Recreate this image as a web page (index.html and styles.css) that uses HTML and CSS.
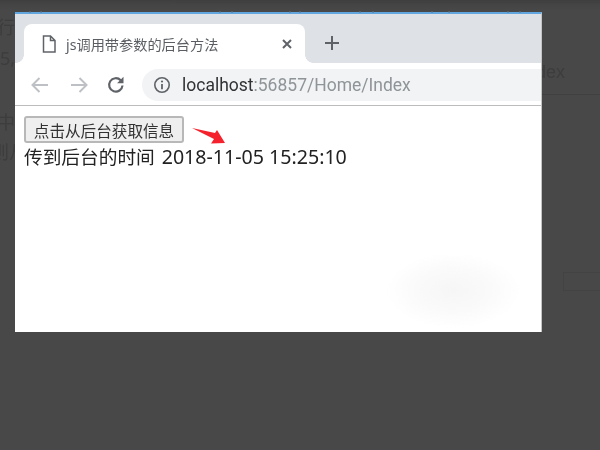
FILE: index.html
```html
<!DOCTYPE html>
<html lang="zh-CN">
<head>
<meta charset="utf-8">
<title>js调用带参数的后台方法</title>
<link rel="stylesheet" href="styles.css">
</head>
<body>
<div class="backdrop">
  <span class="bg-text bg-a">行为</span>
  <span class="bg-text bg-b">5,</span>
  <span class="bg-text bg-c">中点</span>
  <span class="bg-text bg-d">则从</span>
  <span class="bg-text bg-e">Index</span>
  <span class="bg-line bg-line-top"></span>
  <span class="bg-line bg-line-mid"></span>
  <span class="bg-mark"></span>
</div>
<main class="window">
  <div class="tabstrip">
    <div class="tab">
      <svg class="page-icon" width="14" height="18" viewBox="0 0 14 18"><path d="M1.500 1h7l4.500 4.500V17h-11.500z M8.500 1v4.500H13" fill="none" stroke="#5f6368" stroke-width="1.500"/></svg>
      <span class="tab-title">js调用带参数的后台方法</span>
      <svg class="tab-close" width="12" height="12" viewBox="0 0 12 12"><path d="M2 2l8 8M10 2l-8 8" stroke="#5f6368" stroke-width="2"/></svg>
    </div>
    <svg class="new-tab" width="16" height="16" viewBox="0 0 16 16"><path d="M8 1v14M1 8h14" stroke="#5f6368" stroke-width="2"/></svg>
  </div>
  <div class="toolbar">
    <svg class="nav nav-back" width="20" height="18" viewBox="0 0 20 18"><path d="M18 9H3M9.500 2L2.500 9l7 7" fill="none" stroke="#bdc1c6" stroke-width="2"/></svg>
    <svg class="nav nav-forward" width="20" height="18" viewBox="0 0 20 18"><path d="M2 9h15M10.500 2l7 7-7 7" fill="none" stroke="#bdc1c6" stroke-width="2"/></svg>
    <svg class="nav nav-reload" width="20" height="20" viewBox="0 0 20 20"><path d="M16.500 10.500a6.700 6.700 0 1 1-1.800-5.200" fill="none" stroke="#5f6368" stroke-width="2.200"/><path d="M17.500 1.800v6.400h-6.400z" fill="#5f6368"/></svg>
    <div class="omnibox">
      <svg class="info" width="18" height="18" viewBox="0 0 18 18"><circle cx="9" cy="9" r="7.200" fill="none" stroke="#5f6368" stroke-width="1.600"/><path d="M9 8v5.200" stroke="#5f6368" stroke-width="1.800"/><circle cx="9" cy="5.500" r="1.100" fill="#5f6368"/></svg>
      <span class="url"><span class="host">localhost</span>:56857/Home/Index</span>
    </div>
  </div>
  <div class="content">
    <button class="action" type="button">点击从后台获取信息</button>
    <div class="result">传到后台的时间 <span class="stamp">2018-11-05 15:25:10</span></div>
    <svg class="red-arrow" width="36" height="18" viewBox="0 0 36 18"><path d="M1 1L24 6 26 3 34 16 20 16.500 23 12z" fill="#f5222d"/></svg>
    <div class="smudge"></div>
  </div>
</main>
<svg class="ticks" width="600" height="2" viewBox="0 0 600 2"><path d="M30 0v2M41 0v2M220 0v2M232 0v2M290 0v2M300 0v2M360 0v2M373 0v2M432 0v2M449 0v2M508 0v2M520 0v2" stroke="#5d7487" stroke-width="1"/></svg>
</body>
</html>
```

FILE: styles.css
```css
* { box-sizing: border-box; }
html, body { margin: 0; height: 100%; }
body {
  position: relative;
  width: 600px;
  height: 450px;
  overflow: hidden;
  background: #484848;
  padding: 12px 0 0 15px;
  font-family: "Noto Sans", "Noto Sans CJK SC", sans-serif;
}
.backdrop { position: absolute; inset: 0; background: linear-gradient(#3f3f3f 0, #454545 5px, #484848 12px); }
.bg-text { position: absolute; color: #3d3d3d; font-size: 18px; line-height: 20px; white-space: nowrap; filter: blur(.6px); }
.bg-a { left: -3px; top: 17px; }
.bg-b { left: 0; top: 48px; }
.bg-c { left: -3px; top: 112px; }
.bg-d { left: -9px; top: 142px; }
.bg-e { left: 521px; top: 62px; font-family: "Liberation Sans", sans-serif; }
.bg-line { position: absolute; height: 1px; background: #404040; }
.bg-line-top { left: 175px; right: 0; top: 2px; }
.bg-line-mid { left: 542px; right: 0; top: 94px; }
.bg-mark { position: absolute; left: 563px; top: 272px; width: 40px; height: 19px; border: 1px solid #434343; }

.window {
  position: relative;
  width: 527px;
  height: 320px;
  background: #fff;
  border-top: 2px solid #62a6e0;
  border-right: 1px solid #c4c4c4;
  filter: blur(.35px);
}
.ticks { position: absolute; left: 0; top: 11px; }
.tabstrip {
  height: 49px;
  background: #dee1e6;
  padding: 10px 0 0 9px;
  display: flex;
  align-items: flex-start;
}
.tab {
  position: relative;
  width: 281px;
  height: 39px;
  background: #fff;
  border-radius: 8px 8px 0 0;
  display: flex;
  align-items: center;
  padding: 0 12px 0 18px;
  margin-right: 19px;
}
.tab::before, .tab::after {
  content: "";
  position: absolute;
  bottom: 0;
  width: 8px;
  height: 8px;
}
.tab::before { left: -8px; background: radial-gradient(circle at 0 0, #dee1e6 7.500px, #fff 8px); }
.tab::after { right: -8px; background: radial-gradient(circle at 100% 0, #dee1e6 7.500px, #fff 8px); }
.page-icon { flex: none; }
.tab-title {
  flex: 1;
  margin-left: 10px;
  font-size: 14.200px;
  color: #5a5e63;
  white-space: nowrap;
}
.tab-close { flex: none; }
.new-tab { flex: none; margin-top: 11px; }

.toolbar {
  height: 43px;
  display: flex;
  align-items: flex-start;
  padding: 6px 0 0 15px;
  border-bottom: 1px solid #bcbcbc;
}
.nav { flex: none; margin-top: 7px; }
.nav-forward { margin-left: 19px; }
.nav-reload { margin-left: 17px; margin-top: 6px; }
.omnibox {
  flex: 1;
  height: 32px;
  margin-left: 16px;
  background: #f1f3f4;
  border-radius: 16px 0 0 16px;
  display: flex;
  align-items: center;
  padding-left: 11px;
}
.info { flex: none; }
.url {
  margin-left: 11px;
  font-family: Roboto, "Liberation Sans", sans-serif;
  font-size: 17.500px;
  color: #8f9498;
  white-space: nowrap;
}
.host { color: #303236; }

.content { position: relative; height: 225px; padding: 10px 0 0 9px; overflow: hidden; }
.action {
  display: block;
  width: 160px;
  height: 27px;
  padding: 1px 0 0;
  background: #efefef;
  border: 2px solid #b8b8b8;
  border-radius: 3px;
  font-family: "Noto Sans CJK SC", sans-serif;
  font-size: 15.600px;
  line-height: 22px;
  color: #333;
}
.result {
  font-size: 18.700px;
  line-height: 28px;
  color: #222;
  white-space: nowrap;
}
.stamp { font-size: 19.600px; margin-left: 2px; }
.red-arrow { position: absolute; left: 176px; top: 21px; }
.smudge {
  position: absolute;
  left: 371px;
  top: 147px;
  width: 135px;
  height: 75px;
  background: radial-gradient(closest-side, #f6f6f6, #fafafa 55%, #fff);
}
```
